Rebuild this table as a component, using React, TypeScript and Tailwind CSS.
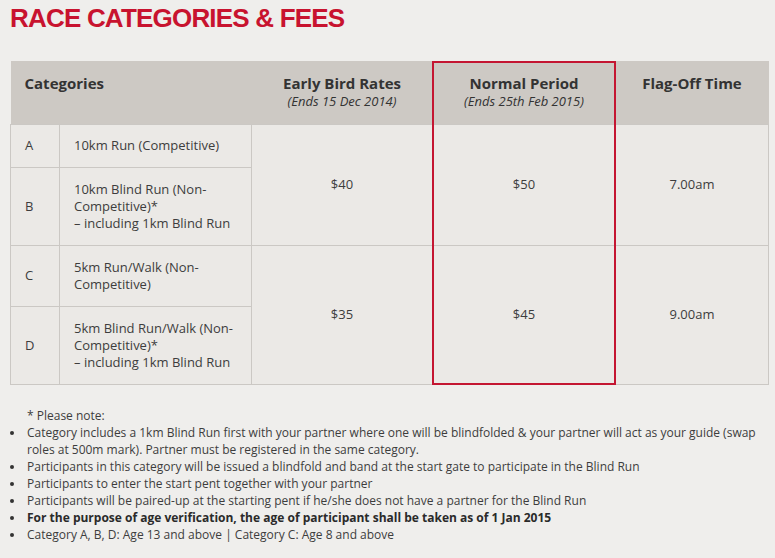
import React from 'react';

const cell = 'border border-[#cbc8c4] bg-[#ebe9e6] align-middle';

const notes = [
  'Category includes a 1km Blind Run first with your partner where one will be blindfolded & your partner will act as your guide (swap roles at 500m mark). Partner must be registered in the same category.',
  'Participants in this category will be issued a blindfold and band at the start gate to participate in the Blind Run',
  'Participants to enter the start pent together with your partner',
  'Participants will be paired-up at the starting pent if he/she does not have a partner for the Blind Run',
];

function Bullet() {
  return (
    <span className="w-[27px] shrink-0 pl-[10px] pt-[7px]">
      <span className="block w-[4px] h-[4px] rounded-full bg-[#333]" />
    </span>
  );
}

function App() {
  return (
    <div className="min-h-screen w-[775px] h-[558px] overflow-hidden bg-[#efeeec] text-[#3d3d3d] font-['Open_Sans',sans-serif]">
      {/* Title */}
      <h1 className="pt-[5px] pl-[10px] text-[26px] leading-[26px] font-bold tracking-[-0.8px] text-[#c8132f] font-['Liberation_Sans',Arial,sans-serif]">
        RACE CATEGORIES &amp; FEES
      </h1>

      {/* Fees table */}
      <div className="relative mt-[30px] ml-[10px] w-[758px]">
        <table className="w-[758px] table-fixed border-collapse text-[13px] leading-[17px]">
          <colgroup>
            <col className="w-[49px]" />
            <col className="w-[192px]" />
            <col className="w-[181px]" />
            <col className="w-[183px]" />
            <col className="w-[153px]" />
          </colgroup>
          <thead>
            <tr className="h-[63px] bg-[#cdc9c4] text-[#333]">
              <th colSpan={2} className="align-top pt-[12px] pl-[14px] text-left text-[15px] leading-[20px] font-bold">
                Categories
              </th>
              <th className="align-top pt-[12px] text-center">
                <div className="text-[15px] leading-[20px] font-bold">Early Bird Rates</div>
                <div className="text-[13px] leading-[16px] italic font-normal">(Ends 15 Dec 2014)</div>
              </th>
              <th className="align-top pt-[12px] text-center">
                <div className="text-[15px] leading-[20px] font-bold">Normal Period</div>
                <div className="text-[13px] leading-[16px] italic font-normal">(Ends 25th Feb 2015)</div>
              </th>
              <th className="align-top pt-[12px] text-center">
                <div className="text-[15px] leading-[20px] font-bold">Flag-Off Time</div>
              </th>
            </tr>
          </thead>
          <tbody>
            <tr className="h-[43px]">
              <td className={`${cell} pl-[14px]`}>A</td>
              <td className={`${cell} pl-[14px] pr-[14px]`}>10km Run (Competitive)</td>
              <td rowSpan={2} className={`${cell} text-center`}>$40</td>
              <td rowSpan={2} className={`${cell} text-center`}>$50</td>
              <td rowSpan={2} className={`${cell} text-center`}>7.00am</td>
            </tr>
            <tr className="h-[78px]">
              <td className={`${cell} pl-[14px]`}>B</td>
              <td className={`${cell} pl-[14px] pr-[14px]`}>
                10km Blind Run (Non-Competitive)*
                <br />– including 1km Blind Run
              </td>
            </tr>
            <tr className="h-[61px]">
              <td className={`${cell} pl-[14px]`}>C</td>
              <td className={`${cell} pl-[14px] pr-[14px]`}>5km Run/Walk (Non-Competitive)</td>
              <td rowSpan={2} className={`${cell} text-center`}>$35</td>
              <td rowSpan={2} className={`${cell} text-center`}>$45</td>
              <td rowSpan={2} className={`${cell} text-center`}>9.00am</td>
            </tr>
            <tr className="h-[78px]">
              <td className={`${cell} pl-[14px]`}>D</td>
              <td className={`${cell} pl-[14px] pr-[14px]`}>
                5km Blind Run/Walk (Non-Competitive)*
                <br />– including 1km Blind Run
              </td>
            </tr>
          </tbody>
        </table>
        {/* highlight around the Normal Period column */}
        <div className="pointer-events-none absolute top-0 bottom-0 left-[422px] w-[184px] border-2 border-[#c41632]" />
      </div>

      {/* Notes */}
      <div className="mt-[22px] text-[12px] leading-[17px] text-[#3d3d3d]">
        <p className="pl-[27px]">* Please note:</p>
        <ul>
          {notes.map((n) => (
            <li key={n} className="flex">
              <Bullet />
              <span className="pr-[8px]">{n}</span>
            </li>
          ))}
          <li className="flex font-bold text-[#2a2a2a]">
            <Bullet />
            <span>For the purpose of age verification, the age of participant shall be taken as of 1 Jan 2015</span>
          </li>
          <li className="flex">
            <Bullet />
            <span>Category A, B, D: Age 13 and above | Category C: Age 8 and above</span>
          </li>
        </ul>
      </div>
    </div>
  );
}

export default App;
